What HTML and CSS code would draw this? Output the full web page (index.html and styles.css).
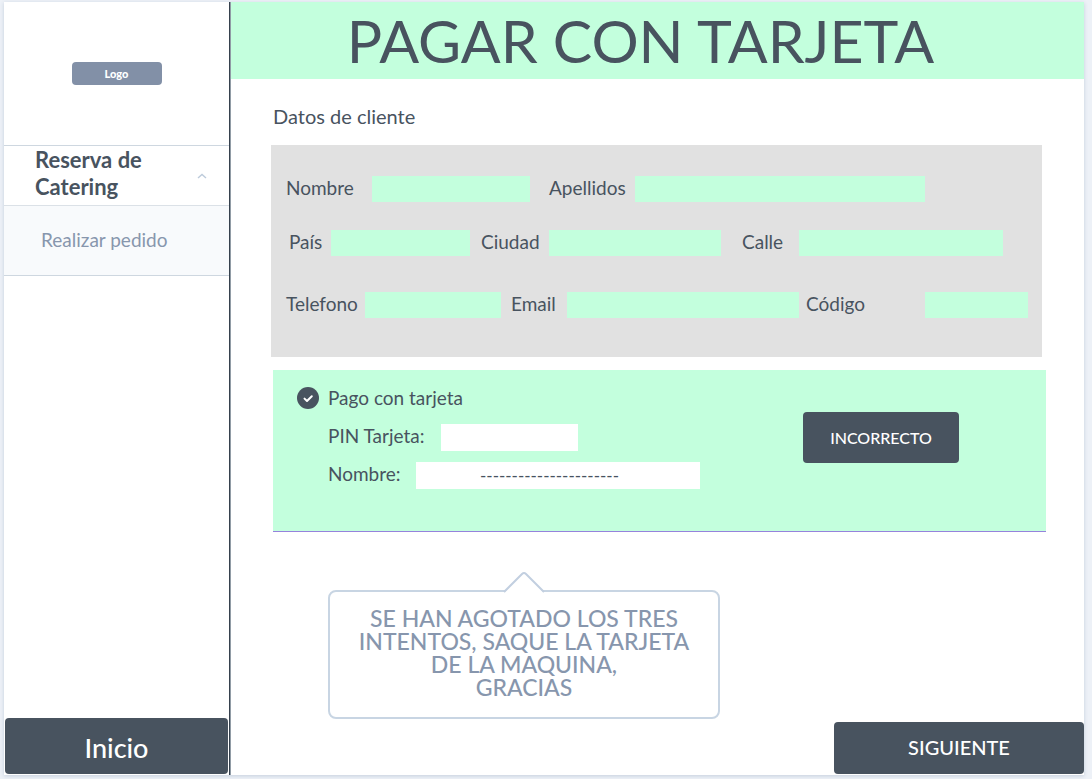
FILE: index.html
```html
<!DOCTYPE html>
<html lang="es">
<head>
<meta charset="utf-8">
<meta name="viewport" content="width=device-width, initial-scale=1">
<title>Pagar con tarjeta</title>
<link rel="stylesheet" href="styles.css">
</head>
<body>
<div class="card">
  <aside class="sidebar">
    <div class="brand"><span class="logo">Logo</span></div>
    <nav class="menu">
      <button type="button" class="menu-group" aria-expanded="true">
        <span>Reserva de Catering</span>
        <svg class="chevron" viewBox="0 0 10 6" aria-hidden="true"><path d="M1 5 L5 1.5 L9 5"/></svg>
      </button>
      <a class="menu-item" href="#pedido">Realizar pedido</a>
    </nav>
    <button type="button" class="btn btn-home">Inicio</button>
  </aside>

  <main class="main">
    <h1 class="title">PAGAR CON TARJETA</h1>
    <form class="content">
      <h2 class="subtitle">Datos de cliente</h2>
      <section class="customer">
        <div class="row row-name">
          <label for="nombre">Nombre</label><input id="nombre" type="text">
          <label for="apellidos">Apellidos</label><input id="apellidos" type="text">
        </div>
        <div class="row row-address">
          <label for="pais">País</label><input id="pais" type="text">
          <label for="ciudad">Ciudad</label><input id="ciudad" type="text">
          <label for="calle">Calle</label><input id="calle" type="text">
        </div>
        <div class="row row-contact">
          <label for="telefono">Telefono</label><input id="telefono" type="text">
          <label for="email">Email</label><input id="email" type="text">
          <label for="codigo">Código</label><input id="codigo" type="text">
        </div>
      </section>

      <section class="payment">
        <div class="payment-fields">
          <label class="method">
            <input type="checkbox" class="method-input" checked>
            <svg class="method-mark" viewBox="0 0 22 22" aria-hidden="true"><circle cx="11" cy="11" r="11"/><path d="M7.5 11.6 L10 14 L14.8 9.2"/></svg>
            <span>Pago con tarjeta</span>
          </label>
          <div class="pay-row pay-pin"><label for="pin">PIN Tarjeta:</label><input id="pin" type="text"></div>
          <div class="pay-row pay-holder"><label for="titular">Nombre:</label><input id="titular" type="text" value="----------------------"></div>
        </div>
        <button type="button" class="btn btn-status">INCORRECTO</button>
      </section>

      <div class="notice" role="alert">
        <svg class="notice-arrow" viewBox="0 0 44 22" aria-hidden="true"><path class="arrow-fill" d="M2 22 L20 3 Q22 1 24 3 L42 22 Z"/><path class="arrow-line" d="M2 21 L20 3 Q22 1 24 3 L42 21"/></svg>
        SE HAN AGOTADO LOS TRES INTENTOS, SAQUE LA TARJETA DE LA MAQUINA,<br>GRACIAS
      </div>
    </form>
    <button type="button" class="btn btn-next">SIGUIENTE</button>
  </main>
</div>
</body>
</html>
```
FILE: styles.css
```css
* { box-sizing: border-box; }

body {
  margin: 0;
  min-height: 100vh;
  display: flex;
  padding: 2px 8px 5px 4px;
  background: #edf1f7;
  color: #48535f;
  font: 19px/24px Lato, sans-serif;
}

button, input { min-width: 0; font: inherit; color: inherit; border: 0; margin: 0; }

.card {
  flex: 1;
  min-width: 0;
  display: flex;
  background: #fff;
  box-shadow: 0 1px 4px #c5cfdc;
}

.sidebar {
  flex: 0 0 226px;
  display: flex;
  flex-direction: column;
  border-right: 1px solid #36414d;
}

.brand {
  height: 143px;
  display: flex;
  align-items: center;
  justify-content: center;
}

.logo {
  width: 90px;
  border-radius: 4px;
  background: #8290a7;
  color: #fff;
  font-size: 11px;
  font-weight: 900;
  line-height: 23px;
  text-align: center;
}

.menu-group {
  width: 100%;
  height: 61px;
  display: flex;
  align-items: center;
  justify-content: space-between;
  padding: 0 22px 0 31px;
  border-top: 1px solid #ced7e0;
  border-bottom: 1px solid #dbe1e7;
  background: #fff;
  font-size: 22px;
  font-weight: 700;
  line-height: 27px;
  text-align: left;
}

.menu-group span { max-width: 120px; padding-bottom: 5px; }

.chevron { width: 10px; height: 6px; fill: none; stroke: #bdcbdb; stroke-width: 1.4; }

.menu-item {
  display: block;
  padding: 0 37px 2px;
  border-bottom: 1px solid #ced7e0;
  background: #f8fafc;
  color: #8796ad;
  line-height: 67px;
  text-decoration: none;
}

.btn { border-radius: 4px; background: #48535f; color: #fff; font-weight: 500; }

.btn-home {
  height: 56px;
  margin: auto 1px 1px;
  padding: 4px 0 0;
  font-size: 27px;
}

.main {
  flex: 1;
  min-width: 0;
  display: flex;
  flex-direction: column;
  border-left: 1px solid #919ca6;
}

.title {
  margin: 0;
  padding: 1px 34px 1px 0;
  background: #c3ffdd;
  font-size: 59px;
  font-weight: 400;
  line-height: 75px;
  text-align: center;
}

.content { padding: 25px 38px 0 40px; }

.subtitle { margin: 0 2px 17px; font-size: 20px; font-weight: 400; line-height: 24px; }

.customer {
  display: grid;
  margin-right: 4px;
  padding: 31px 0 39px;
  background: #e1e1e1;
}

.row { display: grid; line-height: 24px; }

.row input { width: 100%; height: 26px; padding: 0 8px; background: #c3ffdd; }

.row-name {
  grid-template-columns: 86px 158fr 105px 290fr;
  margin-bottom: 28px;
  padding: 0 117px 0 15px;
}

.row-address {
  grid-template-columns: 42px 139fr 79px 172fr 78px 204fr;
  margin-bottom: 36px;
  padding: 0 39px 0 18px;
}

.row-contact {
  grid-template-columns: 79px 136fr 66px 232fr 126px 103fr;
  padding: 0 14px 0 15px;
}

.row-name label:nth-of-type(2) { padding-left: 19px; }
.row-address label:nth-of-type(2) { padding-left: 11px; }
.row-address label:nth-of-type(3) { padding-left: 21px; }
.row-contact label:nth-of-type(2) { padding-left: 10px; }
.row-contact label:nth-of-type(3) { padding-left: 7px; }

.payment {
  display: flex;
  justify-content: space-between;
  align-items: flex-start;
  margin: 13px 0 0 2px;
  padding: 16px 87px 42px 24px;
  border-bottom: 1px solid #9683dc;
  background: #c3ffdd;
}

.payment-fields { flex: 0 1 403px; min-width: 0; }

.method { position: relative; display: flex; align-items: center; gap: 9px; }

.method-input { position: absolute; width: 22px; height: 22px; margin: 0; opacity: 0; }

.method-mark { width: 22px; height: 22px; fill: #48535f; }

.method-mark path { fill: none; stroke: #fff; stroke-width: 2; stroke-linecap: round; stroke-linejoin: round; }

.pay-row { display: flex; align-items: flex-start; padding-left: 31px; }

.pay-row input { flex: 1; height: 27px; background: #fff; }

.pay-pin { margin: 14px 122px 11px 0; }

.pay-pin label { flex: 0 0 113px; }

.pay-holder label { flex: 0 0 88px; }

.pay-holder input { padding: 0 10px 0 64px; font-size: 17px; }

.btn-status { width: 156px; height: 51px; margin-top: 26px; padding: 0; font-size: 16px; }

.notice {
  position: relative;
  width: 392px;
  margin: 58px 0 3px 57px;
  padding: 15px 20px 18px;
  border: 2px solid #c8d5e3;
  border-radius: 8px;
  color: #8796ad;
  font-size: 23px;
  font-weight: 500;
  line-height: 23px;
  text-align: center;
}

.notice-arrow { position: absolute; left: 172px; top: -21px; width: 44px; height: 22px; }

.arrow-fill { fill: #fff; }

.arrow-line { fill: none; stroke: #c2cfe0; stroke-width: 2; }

.btn-next {
  width: 250px;
  height: 52px;
  margin: auto 0 1px auto;
  padding: 0 0 2px;
  font-size: 20px;
}
```
